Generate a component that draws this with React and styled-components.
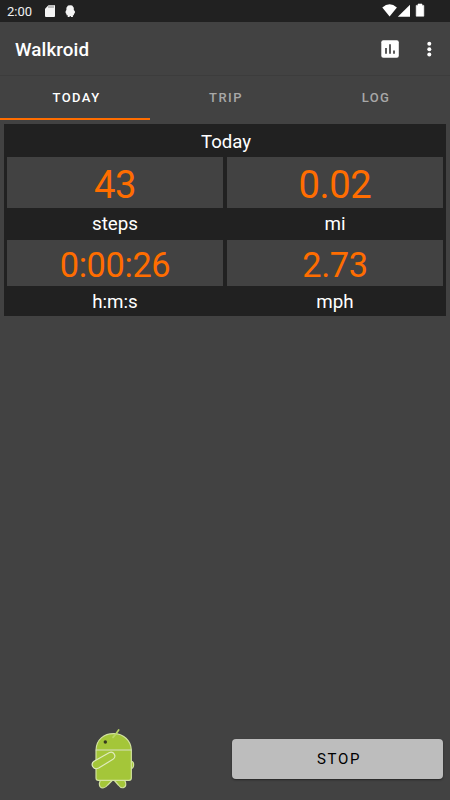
import React from 'react';
import styled, { createGlobalStyle } from 'styled-components';

const GlobalStyle = createGlobalStyle`
  * { box-sizing: border-box; }
  body { margin: 0; background: #424242; font-family: Roboto, sans-serif; }
`;

const Screen = styled.div`
  width: 450px;
  height: 800px;
  display: flex;
  flex-direction: column;
  background: #424242;
  color: #fff;
  overflow: hidden;
`;

const StatusBar = styled.header`
  height: 22px;
  flex: none;
  display: flex;
  align-items: center;
  justify-content: space-between;
  background: #212121;
`;

const StatusLeft = styled.div`
  display: flex;
  align-items: center;
  padding-left: 7px;
`;

const StatusRight = styled.div`
  width: 70px;
`;

const Clock = styled.span`
  width: 37px;
  padding-top: 1px;
  font-size: 13px;
  line-height: 22px;
  color: #f0f0f0;
`;

const Icon = styled.svg`
  display: block;
  flex: none;
`;

const AppBar = styled.div`
  height: 54px;
  flex: none;
  display: flex;
  align-items: center;
  padding: 0 1px 0 15px;
  border-bottom: 1px solid #3c3c3c;
`;

const Title = styled.h1`
  margin: 0;
  padding-top: 2px;
  flex: 1;
  font-size: 18.8px;
  line-height: 24px;
  font-weight: 500;
  letter-spacing: 0.1px;
`;

const IconButton = styled.button`
  width: ${(p) => p.$width}px;
  height: 40px;
  padding: 0;
  border: 0;
  background: none;
  display: flex;
  align-items: center;
  justify-content: center;
`;

const Tabs = styled.nav`
  height: 44px;
  flex: none;
  display: grid;
  grid-template-columns: repeat(3, 1fr);
`;

const Tab = styled.button`
  border: 0;
  border-bottom: 2px solid ${(p) => (p.$active ? '#ff6d00' : 'transparent')};
  padding: 1px 0 0 ${(p) => (p.$active ? 3 : 2)}px;
  background: none;
  font: 500 13px/16px Roboto, sans-serif;
  letter-spacing: 1.42px;
  color: ${(p) => (p.$active ? '#fff' : '#a8a8a8')};
`;

const Panel = styled.section`
  margin: 4px 4px 0;
  padding: 0 3px;
  height: 192px;
  flex: none;
  background: #212121;
  display: grid;
  grid-template-columns: 216px 216px;
  column-gap: 4px;
  grid-template-rows: 33px 51px 32px 46px 30px;
`;

const Heading = styled.h2`
  grid-column: 1 / 3;
  margin: 0;
  padding: 2px 0 0 2px;
  text-align: center;
  font-size: 18.6px;
  font-weight: 400;
  line-height: 33px;
`;

const Value = styled.div`
  display: flex;
  align-items: center;
  justify-content: center;
  padding: ${(p) => p.$top}px 0 0 0;
  background: #424242;
  color: #ff6d00;
  font-size: ${(p) => p.$size}px;
  letter-spacing: -0.4px;
  line-height: 1;
`;

const Unit = styled.div`
  text-align: center;
  font-size: 18.8px;
  line-height: ${(p) => p.$line}px;
`;

const Spacer = styled.div`
  flex: 1;
`;

const Footer = styled.footer`
  height: 80px;
  flex: none;
  display: flex;
`;

const Mascot = styled.div`
  width: 232px;
  padding-left: 80px;
`;

const StopButton = styled.button`
  width: 211px;
  height: 40px;
  margin-top: 19px;
  border: 0;
  border-radius: 4px;
  background: #bdbdbd;
  color: #000;
  font: 400 15px/20px Roboto, sans-serif;
  letter-spacing: 1.7px;
  padding: 0 0 0 3px;
  box-shadow: 0 1px 2px rgba(0, 0, 0, 0.45);
`;

function ConnectionIcons() {
  return (
    <Icon width="60" height="22" viewBox="0 0 60 22" fill="#fff">
      <path d="M2.3 7.5Q9.6 1 16.9 7.5L9.6 16.6Z" />
      <path d="M30 4.7V16.8H17.8Z" />
      <path d="M36.2 5.4H38V4H42V5.4H43.8V16.2H36.2Z" stroke="#fff" strokeWidth=".6" strokeLinejoin="round" />
    </Icon>
  );
}

function NoticeIcons() {
  return (
    <Icon width="32" height="22" viewBox="0 0 32 22" fill="#f5f5f5">
      <path d="M4.7 5H10.2Q11 5 11 6V16Q11 17 10 17H2Q1 17 1 16V8.7Z" />
      <path d="M5 5V8M7 5V8M9 5V8" stroke="#858585" strokeWidth="1" />
      <path d="M24 5.6L26.3 5.2L28.2 5.6L29.8 7.7V10L30.9 11.2V13L29.9 14V15.3H28.9V17H26.8V16H25.7V17H23.7V15.3H22.5V14L21.6 13V11.2L22.4 10V7.7Z" />
    </Icon>
  );
}

function Robot() {
  return (
    <Icon width="70" height="75" viewBox="0 0 210 225">
      <g fill="#a4c639" stroke="#d3e3a0" strokeWidth="3.5" strokeLinejoin="round" strokeLinecap="round">
        <path d="M151 123Q161 123 161 134Q161 145 151 146Z" />
        <path d="M61 180L58 191Q58 203 69 204Q77 203 83 195L98 180H102L115 195Q122 205 130 203Q139 200 137 189L134 180Z" />
        <path d="M48 90C49 58 72 41 101 41C130 41 153 61 154 90V174Q154 181 147 181H55Q48 181 48 174Z" />
        <path d="M49 90H153" fill="none" stroke="#d8e0c4" />
        <path d="M99 52L106 44L116 30" fill="none" stroke="#bad765" strokeWidth="5" />
        <path d="M42 124L87 98C101 92 111 109 99 118L56 144C40 152 30 133 42 124Z" stroke="#dfebbc" />
      </g>
      <circle cx="76" cy="66" r="5.2" fill="#36391f" />
    </Icon>
  );
}

const tabs = ['TODAY', 'TRIP', 'LOG'];

export default function App() {
  return (
    <>
      <GlobalStyle />
      <Screen>
        <StatusBar>
          <StatusLeft>
            <Clock>2:00</Clock>
            <NoticeIcons />
          </StatusLeft>
          <StatusRight>
            <ConnectionIcons />
          </StatusRight>
        </StatusBar>
        <AppBar>
          <Title>Walkroid</Title>
          <IconButton $width={38} aria-label="Statistics">
            <Icon width="18" height="18" viewBox="0 0 18 18">
              <rect width="17.5" height="17.5" rx="2" x=".3" y=".3" fill="#fff" />
              <path d="M5 8V13.7M9 4.3V13.7M13 10.5V13.7" stroke="#333" strokeWidth="1.6" />
            </Icon>
          </IconButton>
          <IconButton $width={40} aria-label="More options">
            <Icon width="6" height="18" viewBox="0 0 6 18" fill="#fff">
              <circle cx="3.3" cy="3.7" r="2" />
              <circle cx="3.3" cy="9.2" r="2" />
              <circle cx="3.3" cy="14.6" r="2" />
            </Icon>
          </IconButton>
        </AppBar>
        <Tabs>
          {tabs.map((name, i) => (
            <Tab key={name} $active={i === 0}>{name}</Tab>
          ))}
        </Tabs>
        <Panel>
          <Heading>Today</Heading>
          <Value $size={38.2} $top={5}>43</Value>
          <Value $size={38.2} $top={5}>0.02</Value>
          <Unit $line={33}>steps</Unit>
          <Unit $line={33}>mi</Unit>
          <Value $size={34.4} $top={4}>0:00:26</Value>
          <Value $size={34.4} $top={4}>2.73</Value>
          <Unit $line={32}>h:m:s</Unit>
          <Unit $line={32}>mph</Unit>
        </Panel>
        <Spacer />
        <Footer>
          <Mascot><Robot /></Mascot>
          <StopButton>STOP</StopButton>
        </Footer>
      </Screen>
    </>
  );
}
